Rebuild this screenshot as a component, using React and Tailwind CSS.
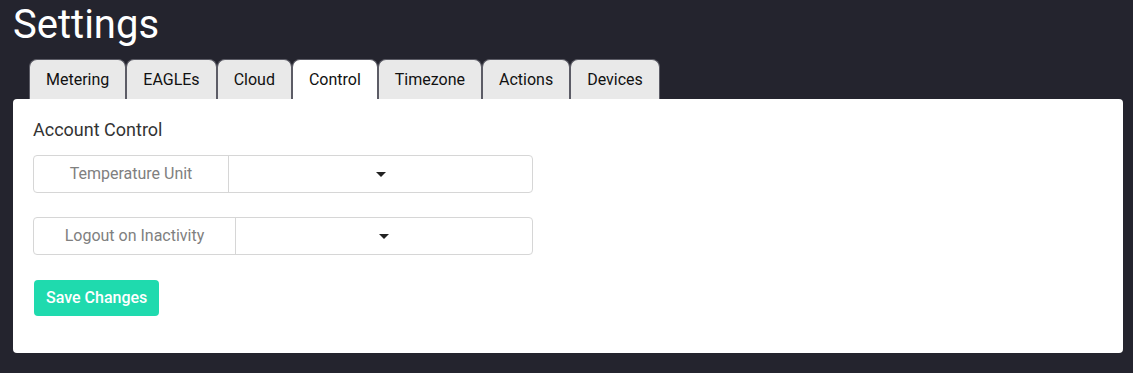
import React, { useState } from 'react';

const tabs = ['Metering', 'EAGLEs', 'Cloud', 'Control', 'Timezone', 'Actions', 'Devices'];

const Caret = () => (
    <svg width="10" height="5" viewBox="0 0 10 5" className="block">
        <path d="M0 0 L10 0 L5 5 Z" fill="#222" />
    </svg>
);

const SelectRow = ({ label, labelWidth }) => (
    <div className="flex h-[38px] w-[500px] rounded border border-[#d6d6d6]">
        <div className={`flex shrink-0 items-center justify-center border-r border-[#d6d6d6] text-[16px] text-[#808080] ${labelWidth}`}>
            {label}
        </div>
        <div className="flex flex-1 items-center justify-center">
            <Caret />
        </div>
    </div>
);

const App = () => {
    const [active, setActive] = useState('Control');

    return (
        <div className="min-h-[373px] bg-[#24242e] pl-[13px] pr-[10px] pb-5 font-['Roboto',sans-serif]">
            <h1 className="pt-[1px] text-[40px] leading-[48px] text-white">Settings</h1>

            {/* Tabs */}
            <div className="mt-[10px] flex pl-4">
                {tabs.map((t) => (
                    <button
                        key={t}
                        onClick={() => setActive(t)}
                        className={`h-[40px] rounded-t-lg border border-b-0 border-[#5c5c66] px-4 text-[16px] text-[#111] ${
                            active === t ? 'bg-white' : 'bg-[#e9e9e9]'
                        }`}
                    >
                        {t}
                    </button>
                ))}
            </div>

            {/* Panel */}
            <div className="rounded bg-white px-5 pt-[19px] pb-[37px]">
                <h2 className="text-[18px] leading-6 text-[#333]">Account Control</h2>
                <div className="mt-[13px] flex flex-col gap-[24px]">
                    <SelectRow label="Temperature Unit" labelWidth="w-[195px]" />
                    <SelectRow label="Logout on Inactivity" labelWidth="w-[202px]" />
                </div>
                <button className="mt-[25px] ml-px h-[36px] rounded bg-[#1fdaae] px-3 text-[16px] font-medium text-white">
                    Save Changes
                </button>
            </div>
        </div>
    );
};

export default App;
